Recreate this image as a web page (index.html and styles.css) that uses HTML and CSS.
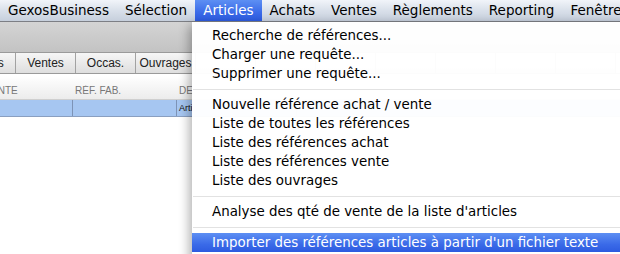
FILE: index.html
```html
<!DOCTYPE html>
<html lang="fr">

<head>
    <meta charset="UTF-8">
    <meta name="viewport" content="width=device-width, initial-scale=1.0">
    <title>GexosBusiness</title>
    <link rel="stylesheet" href="styles.css">
</head>

<body>
    <div class="menubar">
        <span class="menu-title">GexosBusiness</span>
        <span class="menu-title">Sélection</span>
        <span class="menu-title active">Articles</span>
        <span class="menu-title">Achats</span>
        <span class="menu-title">Ventes</span>
        <span class="menu-title">Règlements</span>
        <span class="menu-title">Reporting</span>
        <span class="menu-title">Fenêtre</span>
    </div>

    <div class="window">
        <div class="toolbar"></div>
        <div class="tabs">
            <span class="tab">Achats</span>
            <span class="tab">Ventes</span>
            <span class="tab">Occas.</span>
            <span class="tab">Ouvrages</span>
            <!-- onglets caches sous le menu -->
            <span class="tab"></span>
            <span class="tab"></span>
            <span class="tab"></span>
            <span class="tab"></span>
            <span class="tab"></span>
            <span class="tab"></span>
            <span class="tab"></span>
        </div>
        <div class="list">
            <div class="list-head">
                <span class="col col-1">RÉF. VENTE</span>
                <span class="col col-2">RÉF. FAB.</span>
                <span class="col col-3">DE</span>
            </div>
            <div class="list-row selected">
                <span class="col col-1"></span>
                <span class="col col-2"></span>
                <span class="col col-3">Arti</span>
            </div>
        </div>
    </div>

    <!-- menu Articles deroule -->
    <div class="dropdown">
        <div class="item">Recherche de références...</div>
        <div class="item">Charger une requête...</div>
        <div class="item">Supprimer une requête...</div>
        <div class="sep"></div>
        <div class="item">Nouvelle référence achat / vente</div>
        <div class="item">Liste de toutes les références</div>
        <div class="item">Liste des références achat</div>
        <div class="item">Liste des références vente</div>
        <div class="item">Liste des ouvrages</div>
        <div class="sep"></div>
        <div class="item">Analyse des qté de vente de la liste d'articles</div>
        <div class="sep"></div>
        <div class="item hover">Importer des références articles à partir d'un fichier texte</div>
    </div>
</body>

</html>
```

FILE: styles.css
```css
* {
    padding: 0;
    margin: 0;
    box-sizing: border-box;
}

body {
    width: 620px;
    height: 254px;
    overflow: hidden;
    position: relative;
    background: #fff;
    font-family: "DejaVu Sans", "Liberation Sans", sans-serif;
}

.menubar {
    display: flex;
    height: 22px;
    background: linear-gradient(#f1f4f9, #d9e0ea 50%, #c6cfdc);
    border-bottom: 1px solid #7d7f85;
    font-size: 13.5px;
    white-space: nowrap;
}

.menu-title {
    line-height: 21px;
    padding: 0 8px;
    color: #000;
}

.menu-title.active {
    background: linear-gradient(#5d8ff3, #3a6ae8 60%, #2d5be0);
    color: #fff;
}

.toolbar {
    height: 30px;
    background: linear-gradient(#d4d4d4, #c3c3c3);
}

.tabs {
    display: flex;
    height: 22px;
    margin-left: -44px;
    background: #e4e4e4;
    border-top: 1px solid #9a9a9a;
    border-bottom: 1px solid #9a9a9a;
    font-family: "Liberation Sans", Arial, sans-serif;
    font-size: 12px;
    white-space: nowrap;
}

.tab {
    flex: 0 0 60px;
    text-align: center;
    line-height: 20px;
    color: #222;
    background: linear-gradient(#f6f6f6, #dedede);
    border-right: 1px solid #a2a2a2;
    overflow: hidden;
}

.list {
    padding-top: 2px;
}

.list-head,
.list-row {
    display: flex;
    margin-left: -42px;
    font-family: "Liberation Sans", Arial, sans-serif;
    white-space: nowrap;
}

.list-head {
    height: 24px;
    background: linear-gradient(#ffffff, #ececec);
    border-bottom: 1px solid #cfcfcf;
    font-size: 10px;
    color: #777;
    align-items: flex-end;
    padding-bottom: 3px;
}

.list-row {
    height: 17px;
    font-size: 9px;
    line-height: 16px;
    color: #111;
}

.list-row.selected {
    background: #a6c6f1;
    border-bottom: 1px solid #8a9fc0;
}

.col {
    padding-left: 2px;
    overflow: hidden;
}

.col-1 {
    width: 115px;
}

.col-2 {
    width: 104px;
}

.col-3 {
    width: 120px;
}

.list-row .col {
    border-right: 1px solid #7d93b6;
}

.dropdown {
    position: absolute;
    top: 22px;
    left: 192px;
    width: 440px;
    height: 240px;
    padding-top: 4px;
    background: rgba(255, 255, 255, 0.97);
    box-shadow: -3px 3px 10px rgba(0, 0, 0, 0.3);
    font-size: 13.4px;
    color: #000;
    white-space: nowrap;
}

.item {
    height: 19px;
    line-height: 19px;
    padding-left: 20px;
}

.item.hover {
    background: linear-gradient(#5d8ff3, #3a6ae8 60%, #2d5be0);
    color: #fff;
}

.sep {
    height: 12px;
    position: relative;
}

.sep::after {
    content: "";
    position: absolute;
    left: 1px;
    right: 0;
    top: 6px;
    border-top: 1px solid #e2e2e2;
}
```
